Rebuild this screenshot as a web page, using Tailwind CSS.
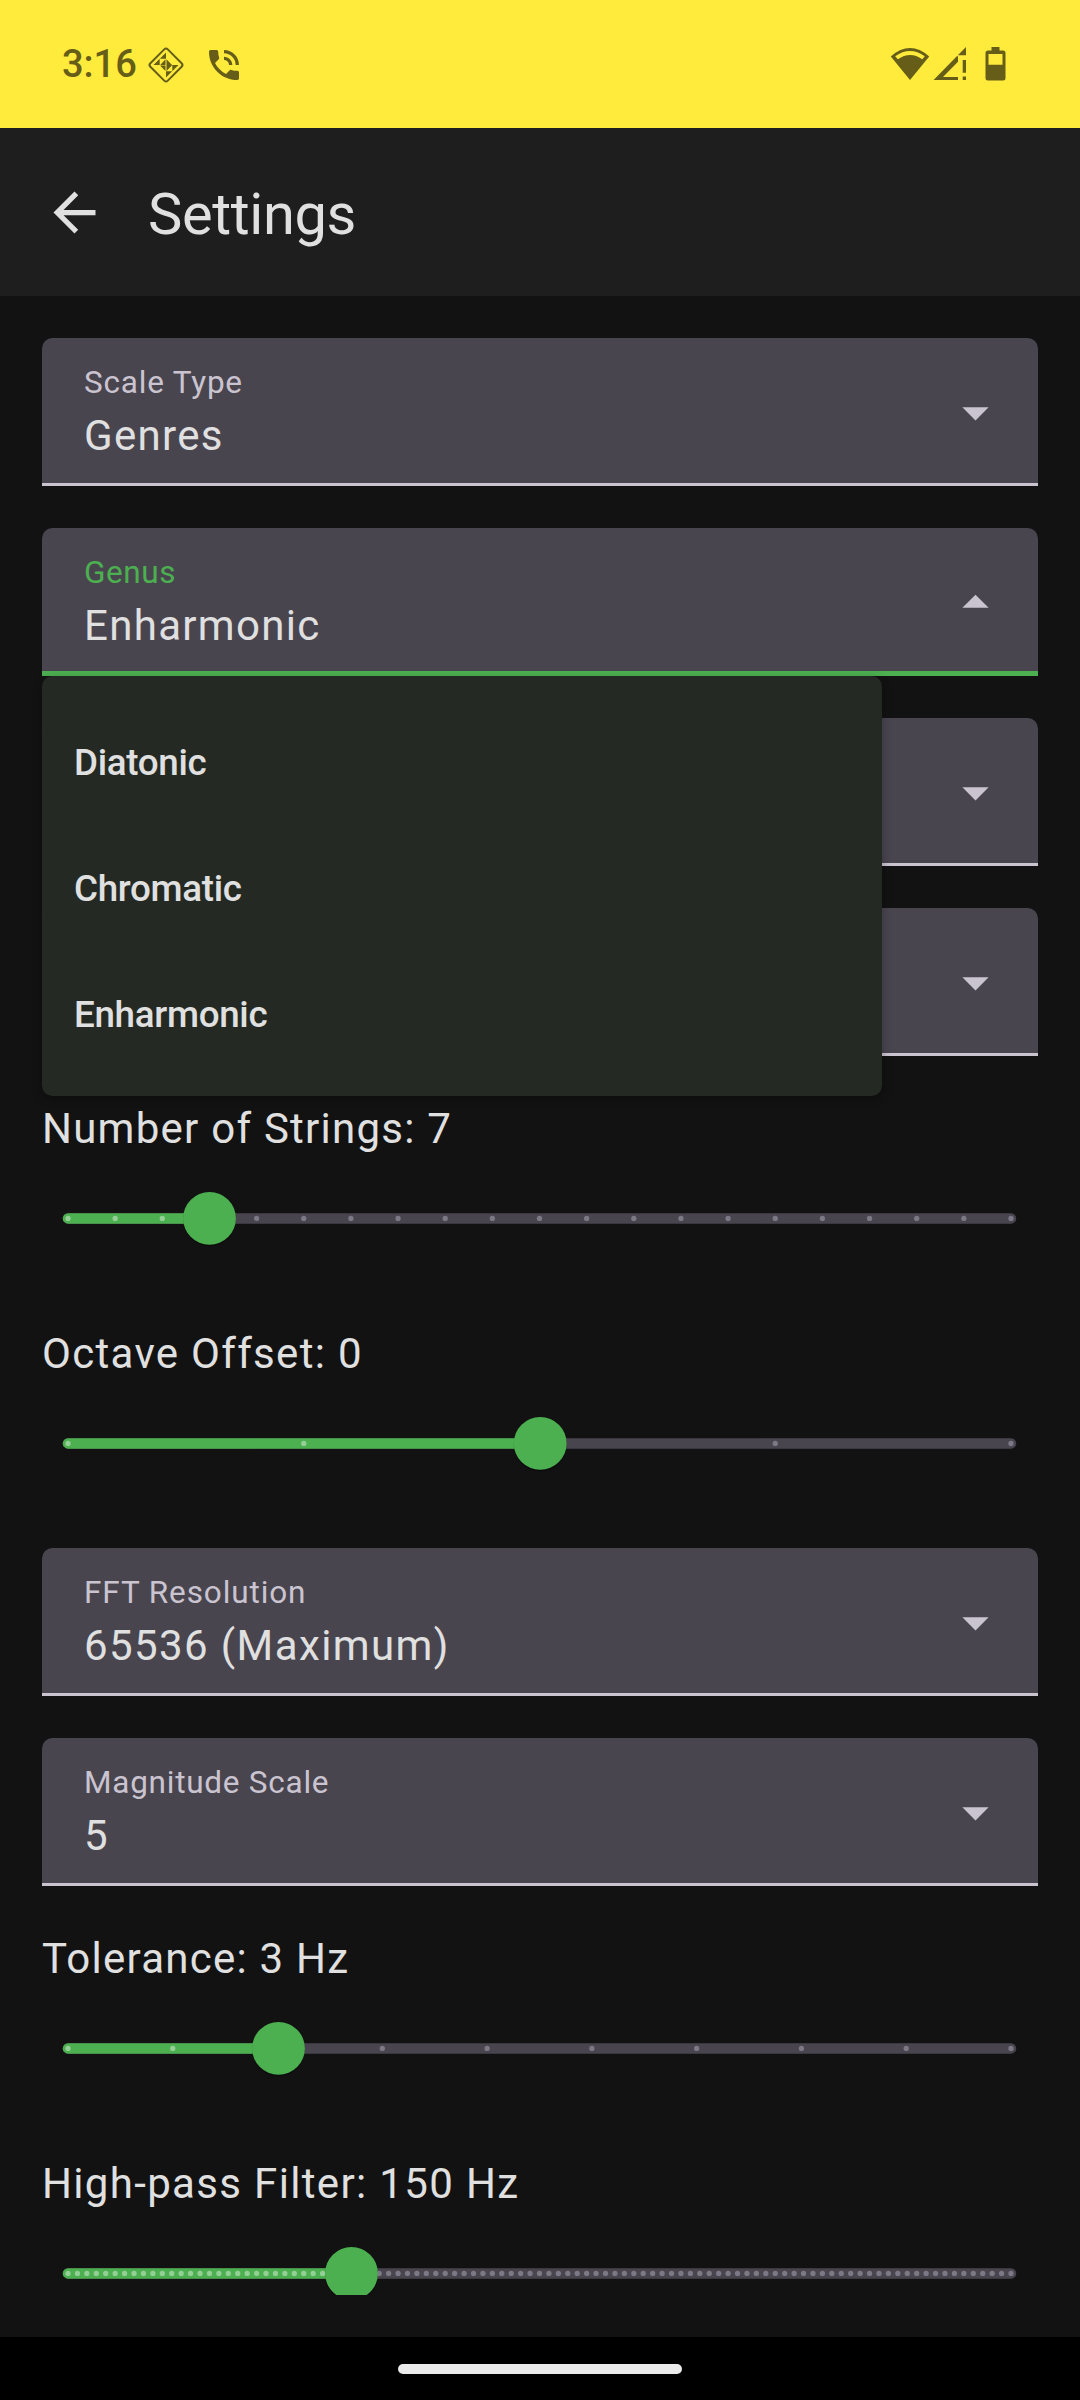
<!DOCTYPE html>
<html lang="en">
<head>
<meta charset="utf-8">
<title>Settings</title>
<script src="https://cdn.jsdelivr.net/npm/@tailwindcss/browser@4"></script>
</head>
<body class="w-[1080px] h-[2400px] overflow-hidden bg-[#121212] font-['Roboto',sans-serif] text-[#e0e0e0] flex flex-col">

<!-- Status bar -->
<div class="h-32 shrink-0 bg-[#ffeb3b] text-[#665e18] flex items-start pl-[62px] pr-[74px] pt-[46px]">
  <span class="w-[85px] text-[38px] leading-[36px] font-medium">3:16</span>
  <svg class="w-[38px] h-[38px]" viewBox="0 0 38 38" fill="currentColor">
    <rect x="6.700" y="6.700" width="24.600" height="24.600" rx="2.500" transform="rotate(45 19 19)" fill="none" stroke="currentColor" stroke-width="2"/>
    <path d="M19 6.500v6.200h-6.200zM6.500 19l6.200-6.200v6.200zM18.500 13.200v5.800h-5.300zM19.500 13.200l5.500 5.800h-5.500zM13 19.500h5.500v5.500zM19.500 19h5.800l-5.800 6zM25.300 19h6.200l-6.200 6.200zM19 25.300h6.200l-6.200 6.200z"/>
  </svg>
  <svg class="w-[40px] h-[40px] ml-[19px] -mt-px" viewBox="0 0 24 24" fill="currentColor">
    <path d="M20 15.500c-1.250 0-2.450-.2-3.570-.57-.1-.03-.21-.05-.31-.05-.26 0-.51.1-.71.290l-2.200 2.200c-2.830-1.440-5.150-3.750-6.590-6.590l2.200-2.200c.28-.28.36-.67.250-1.020C8.700 6.450 8.500 5.250 8.500 4c0-.55-.45-1-1-1H4c-.55 0-1 .45-1 1 0 9.390 7.610 17 17 17 .55 0 1-.45 1-1v-3.500c0-.55-.45-1-1-1zM19 12h2c0-4.970-4.030-9-9-9v2c3.870 0 7 3.130 7 7zm-4 0h2c0-2.760-2.240-5-5-5v2c1.660 0 3 1.340 3 3z"/>
  </svg>
  <div class="ml-auto flex">
    <svg class="w-10 h-9" viewBox="0 0 40 36">
      <path d="M20 33.800L.8 10.200Q20-6.500 39.200 10.200z" fill="currentColor" transform="translate(0 .2)"/>
      <path d="M5.200 10.200Q20-.2 34.800 10.200l-2.500 3q-12-8.500-24.500 0z" fill="#ffeb3b"/>
    </svg>
    <svg class="w-[34px] h-9 ml-[3px]" viewBox="0 0 34 36" fill="currentColor">
      <path d="M33 1v8.300h-8.200zM23.800 10.300h1.200v5.500L10 31h15v3H.6zM29.700 14h3.300v12.800h-3.300zM29.700 30.500h3.300v3.500h-3.300z"/>
    </svg>
    <svg class="w-[21px] h-9 ml-[18px]" viewBox="0 0 21 36" fill="currentColor">
      <path fill-rule="evenodd" d="M6.500 1h8v3.500h3.500q2.500 0 2.500 2.500v25q0 2.500-2.500 2.500H3q-2.500 0-2.500-2.500V7q0-2.500 2.500-2.500h3.500zM3.500 8v10.700h14V8z"/>
    </svg>
  </div>
</div>

<!-- App bar -->
<header class="h-[168px] shrink-0 bg-[#1e1e1e] flex items-center pl-[43px]">
  <svg class="w-[63px] h-[63px]" viewBox="0 0 24 24" fill="currentColor"><path d="M20 11H7.830l5.590-5.590L12 4l-8 8 8 8 1.410-1.410L7.830 13H20v-2z"/></svg>
  <h1 class="ml-[42px] pt-[3px] text-[57.75px] leading-[74px] tracking-[-0.35px]">Settings</h1>
</header>

<!-- Scrolling settings list -->
<main class="h-[1999px] shrink-0 overflow-hidden px-[42px] pt-[42px]">
  <section class="flex flex-col gap-[42px]">
    <div class="h-[148px] rounded-t-[10.5px] bg-[#49454f] border-b-[3px] border-[#cac4d0] flex items-center justify-between pl-[42px] pr-[31px]">
      <div class="pt-2">
        <div class="text-[31.5px] leading-[42px] tracking-[0.8px] text-[#cac4d0]">Scale Type</div>
        <div class="text-[42px] leading-[63px] tracking-[1.31px]">Genres</div>
      </div>
      <svg class="w-[63px] h-[63px] mt-[3px] text-[#cac4d0]" viewBox="0 0 24 24" fill="currentColor"><path d="M7 10l5 5 5-5z"/></svg>
    </div>
    <div class="relative h-[148px]">
      <div class="h-[148px] rounded-t-[10.5px] bg-[#49454f] border-b-[5px] border-[#4caf50] flex items-center justify-between pl-[42px] pr-[31px]">
        <div class="pt-2.5">
          <div class="text-[31.5px] leading-[42px] tracking-[0.6px] text-[#4caf50]">Genus</div>
          <div class="text-[42px] leading-[63px] tracking-[1.31px]">Enharmonic</div>
        </div>
        <svg class="w-[63px] h-[63px] mt-[5px] text-[#cac4d0]" viewBox="0 0 24 24" fill="currentColor"><path d="M7 14l5-5 5 5z"/></svg>
      </div>
      <!-- Open dropdown -->
      <ul class="absolute z-10 left-0 top-[148px] w-[840px] h-[420px] pt-6 pb-[18px] rounded-[10.5px] bg-[#242a23] shadow-[0_3px_10px_rgba(0,0,0,0.3)] text-[36.75px] leading-[126px] tracking-[-0.3px] font-medium">
        <li class="h-[126px] pl-8">Diatonic</li>
        <li class="h-[126px] pl-8">Chromatic</li>
        <li class="h-[126px] pl-8">Enharmonic</li>
      </ul>
    </div>
    <div class="h-[148px] rounded-t-[10.5px] bg-[#49454f] border-b-[3px] border-[#cac4d0] flex items-center justify-end pr-[31px]">
      <svg class="w-[63px] h-[63px] mt-[3px] text-[#cac4d0]" viewBox="0 0 24 24" fill="currentColor"><path d="M7 10l5 5 5-5z"/></svg>
    </div>
    <div class="h-[148px] rounded-t-[10.5px] bg-[#49454f] border-b-[3px] border-[#cac4d0] flex items-center justify-end pr-[31px]">
      <svg class="w-[63px] h-[63px] mt-[3px] text-[#cac4d0]" viewBox="0 0 24 24" fill="currentColor"><path d="M7 10l5 5 5-5z"/></svg>
    </div>
  </section>

  <section class="mt-[42px]">
    <div class="h-[225px]">
      <div class="pb-[2px] text-[42px] leading-[61px] tracking-[1.25px]">Number of Strings: 7</div>
      <svg class="w-[996px] h-[116px]" data-steps="20" data-thumb="167.500"></svg>
    </div>
    <div class="h-[225px]">
      <div class="pb-[2px] text-[42px] leading-[61px] tracking-[1.31px]">Octave Offset: 0</div>
      <svg class="w-[996px] h-[116px]" data-steps="4" data-thumb="498.200"></svg>
    </div>
  </section>

  <section class="flex flex-col gap-[42px]">
    <div class="h-[148px] rounded-t-[10.5px] bg-[#49454f] border-b-[3px] border-[#cac4d0] flex items-center justify-between pl-[42px] pr-[31px]">
      <div class="pt-2">
        <div class="text-[31.5px] leading-[42px] tracking-[0.9px] text-[#cac4d0]">FFT Resolution</div>
        <div class="text-[42px] leading-[63px] tracking-[1.4px]">65536 (Maximum)</div>
      </div>
      <svg class="w-[63px] h-[63px] mt-[3px] text-[#cac4d0]" viewBox="0 0 24 24" fill="currentColor"><path d="M7 10l5 5 5-5z"/></svg>
    </div>
    <div class="h-[148px] rounded-t-[10.5px] bg-[#49454f] border-b-[3px] border-[#cac4d0] flex items-center justify-between pl-[42px] pr-[31px]">
      <div class="pt-2">
        <div class="text-[31.5px] leading-[42px] tracking-[0.75px] text-[#cac4d0]">Magnitude Scale</div>
        <div class="text-[42px] leading-[63px] tracking-[1.31px]">5</div>
      </div>
      <svg class="w-[63px] h-[63px] mt-[3px] text-[#cac4d0]" viewBox="0 0 24 24" fill="currentColor"><path d="M7 10l5 5 5-5z"/></svg>
    </div>
  </section>

  <section class="mt-[42px]">
    <div class="h-[225px]">
      <div class="pb-[2px] text-[42px] leading-[61px] tracking-[1.25px]">Tolerance: 3 Hz</div>
      <svg class="w-[996px] h-[116px]" data-steps="9" data-thumb="236.500"></svg>
    </div>
    <div class="h-[225px]">
      <div class="pb-[2px] text-[42px] leading-[61px] tracking-[1.34px]">High-pass Filter: 150 Hz</div>
      <svg class="w-[996px] h-[116px]" data-steps="100" data-thumb="309.500"></svg>
    </div>
  </section>
</main>

<!-- Gesture navigation -->
<nav class="mt-auto h-[63px] shrink-0 bg-black flex justify-center pt-[27px]">
  <div class="w-[284px] h-[10px] rounded-full bg-[#ebebeb]"></div>
</nav>

<script>
  // Fill each slider with its track, tick marks and thumb.
  document.querySelectorAll('svg[data-steps]').forEach(svg => {
    const steps = +svg.dataset.steps, thumb = +svg.dataset.thumb, y = 57.4;
    const start = 26, end = 969;
    let out = `<line x1="${start}" y1="${y}" x2="${end}" y2="${y}" stroke="#49454f" stroke-width="10.500" stroke-linecap="round"/>` +
      `<line x1="${start}" y1="${y}" x2="${thumb}" y2="${y}" stroke="#4caf50" stroke-width="10.500" stroke-linecap="round"/>`;
    for (let i = 0; i <= steps; i++) {
      const x = start + (end - start) * i / steps;
      out += `<circle cx="${x}" cy="${y}" r="2.625" fill="${x < thumb ? '#94cf96' : '#7d7885'}"/>`;
    }
    svg.innerHTML = out + `<circle cx="${thumb}" cy="${y + 1.5}" r="26.500" fill="#000" opacity=".25"/><circle cx="${thumb}" cy="${y}" r="26.400" fill="#4caf50"/>`;
  });
</script>
</body>
</html>
